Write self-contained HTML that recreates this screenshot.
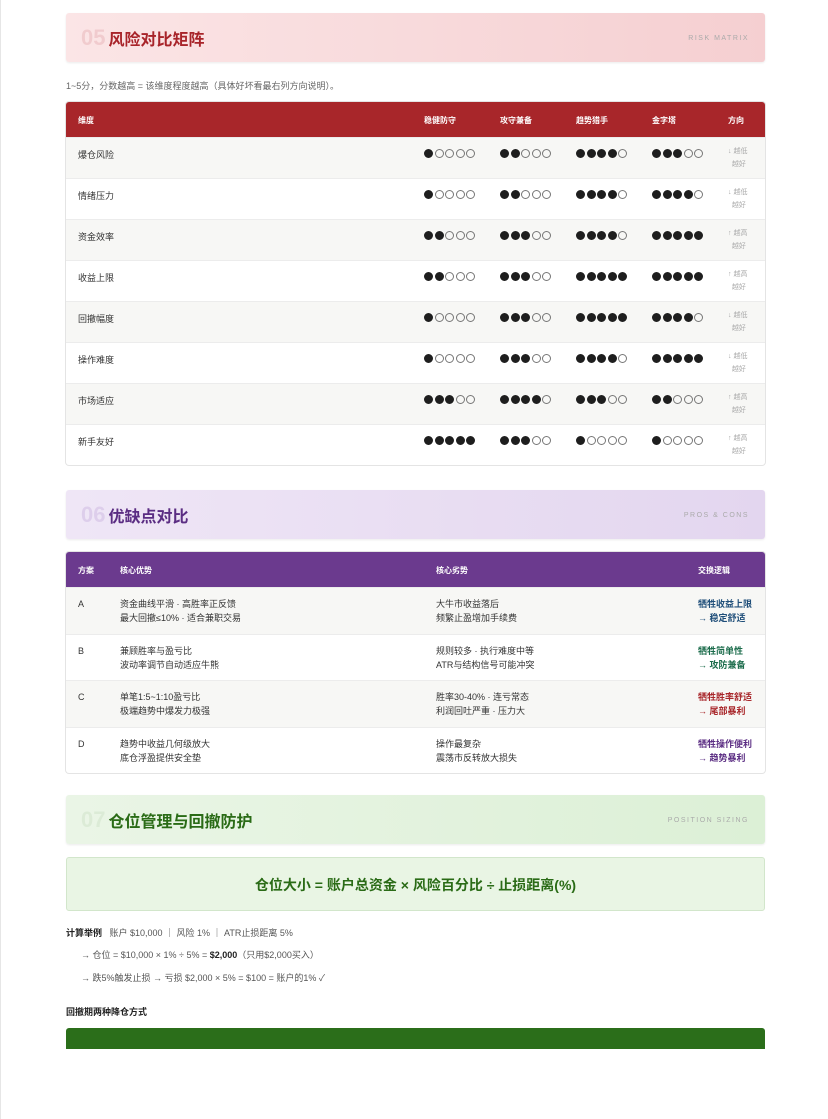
<!DOCTYPE html><html><head><meta charset="utf-8"><style>
*{box-sizing:border-box;margin:0;padding:0}
body{width:828px;height:1119px;background:#fff;font-family:"Liberation Sans","Noto Sans CJK SC",sans-serif;color:#333;position:relative;overflow:hidden;border-left:1px solid #e6e6e6}
.abs{position:absolute}
.sec{position:absolute;left:65px;width:699px;height:49px;border-radius:3px;box-shadow:0 1px 2px rgba(0,0,0,.08)}
.sec .h{position:absolute;left:15px;top:12px;display:flex;align-items:baseline;gap:3px}
.sec .n{font-size:22px;font-weight:bold;opacity:.5}
.sec .t{font-size:16px;font-weight:bold}
.sec .e{position:absolute;right:16px;top:22px;font-size:7px;letter-spacing:1.5px;color:#aaa}
.tbl{position:absolute;left:65px;width:699px;border-radius:3px;overflow:hidden;box-shadow:0 0 0 1px #e4e4e4}
.hd{height:35px;color:#fff;font-size:8px;font-weight:bold;position:relative}
.row{position:relative;border-top:1px solid #ececec;font-size:9px;color:#333}
.row:nth-child(odd){background:#f7f7f5}
.c{position:absolute}
.d{display:flex;gap:1.5px}
.d i{display:block;width:9px;height:9px;border-radius:50%;border:1px solid #777}
.d i.f{background:#1e1e1e;border-color:#1e1e1e}
.dir{font-size:7px;color:#aaa;line-height:13px}
</style></head><body>
<div class="sec" style="top:13px;background:linear-gradient(90deg,#fbe5e6,#f5cfd1)"><div class="h"><span class="n" style="color:#e8b4b8">05</span><span class="t" style="color:#a8242a">风险对比矩阵</span></div><span class="e">RISK MATRIX</span></div>
<div class="abs" style="left:65px;top:79px;font-size:9px;color:#666">1~5分，分数越高 = 该维度程度越高（具体好坏看最右列方向说明）。</div>
<div class="tbl" style="top:102px">
<div class="hd" style="background:#a8262a"><span class="c" style="left:12px;top:13px">维度</span><span class="c" style="left:358px;top:13px">稳健防守</span><span class="c" style="left:434px;top:13px">攻守兼备</span><span class="c" style="left:510px;top:13px">趋势猎手</span><span class="c" style="left:586px;top:13px">金字塔</span><span class="c" style="left:662px;top:13px">方向</span></div>
<div id="rows"></div>
</div>
<div class="sec" style="top:490px;background:linear-gradient(90deg,#efe6f6,#e3d6ef)"><div class="h"><span class="n" style="color:#cdb8e2">06</span><span class="t" style="color:#5b2d83">优缺点对比</span></div><span class="e">PROS &amp; CONS</span></div>
<div class="tbl" style="top:552px">
<div class="hd" style="background:#6b3a8e"><span class="c" style="left:12px;top:13px">方案</span><span class="c" style="left:54px;top:13px">核心优势</span><span class="c" style="left:370px;top:13px">核心劣势</span><span class="c" style="left:632px;top:13px">交换逻辑</span></div>
<div id="pc"></div>
</div>
<div class="sec" style="top:795px;background:linear-gradient(90deg,#eaf5e6,#dcf0d6)"><div class="h"><span class="n" style="color:#cfe3c9">07</span><span class="t" style="color:#2a6b16">仓位管理与回撤防护</span></div><span class="e">POSITION SIZING</span></div>
<div class="abs" style="left:65px;top:857px;width:699px;height:54px;background:#e9f5e4;border:1px solid #d2e6cb;border-radius:3px;text-align:center;line-height:54px;font-size:14px;font-weight:bold;color:#2a6b16">仓位大小 = 账户总资金 × 风险百分比 ÷ 止损距离(%)</div>
<div class="abs" style="left:65px;top:926px;font-size:9px;color:#555"><b style="color:#222">计算举例</b>&nbsp;&nbsp; 账户 $10,000 ｜ 风险 1% ｜ ATR止损距离 5%</div>
<div class="abs" style="left:80px;top:948px;font-size:9px;color:#555">→ 仓位 = $10,000 × 1% ÷ 5% = <b style="color:#222">$2,000</b>（只用$2,000买入）</div>
<div class="abs" style="left:80px;top:971px;font-size:9px;color:#555">→ 跌5%触发止损 → 亏损 $2,000 × 5% = $100 = 账户的1% ✓</div>
<div class="abs" style="left:65px;top:1005px;font-size:9px;font-weight:bold;color:#222">回撤期两种降仓方式</div>
<div class="abs" style="left:65px;top:1028px;width:699px;height:21px;background:#2b6e1a;border-radius:3px 3px 0 0"></div>
<script>
var R=[["爆仓风险",1,2,4,3,0],["情绪压力",1,2,4,4,0],["资金效率",2,3,4,5,1],["收益上限",2,3,5,5,1],["回撤幅度",1,3,5,4,0],["操作难度",1,3,4,5,0],["市场适应",3,4,3,2,1],["新手友好",5,3,1,1,1]];
var h="";R.forEach(function(r){h+='<div class="row" style="height:41px"><span class="c" style="left:12px;top:10px">'+r[0]+'</span>';[1,2,3,4].forEach(function(i){var s="";for(var k=0;k<5;k++)s+='<i'+(k<r[i]?' class="f"':'')+'></i>';h+='<span class="c d" style="left:'+(358+(i-1)*76)+'px;top:11px">'+s+'</span>'});h+='<span class="c dir" style="left:662px;top:7px">'+(r[5]?'↑ 越高<br>&nbsp;&nbsp;越好':'↓ 越低<br>&nbsp;&nbsp;越好')+'</span></div>'});
document.getElementById("rows").innerHTML=h;
var P=[["A","资金曲线平滑 · 高胜率正反馈","最大回撤≤10% · 适合兼职交易","大牛市收益落后","频繁止盈增加手续费","牺牲收益上限","→ 稳定舒适","#1f4e79"],["B","兼顾胜率与盈亏比","波动率调节自动适应牛熊","规则较多 · 执行难度中等","ATR与结构信号可能冲突","牺牲简单性","→ 攻防兼备","#1a6b4a"],["C","单笔1:5~1:10盈亏比","极端趋势中爆发力极强","胜率30-40% · 连亏常态","利润回吐严重 · 压力大","牺牲胜率舒适","→ 尾部暴利","#a8262a"],["D","趋势中收益几何级放大","底仓浮盈提供安全垫","操作最复杂","震荡市反转放大损失","牺牲操作便利","→ 趋势暴利","#5b2d83"]];
h="";P.forEach(function(p){h+='<div class="row" style="height:46.5px;line-height:14px"><span class="c" style="left:12px;top:9px">'+p[0]+'</span><span class="c" style="left:54px;top:9px">'+p[1]+'<br>'+p[2]+'</span><span class="c" style="left:370px;top:9px">'+p[3]+'<br>'+p[4]+'</span><span class="c" style="left:632px;top:9px;font-weight:bold;color:'+p[7]+'">'+p[5]+'<br>'+p[6]+'</span></div>'});
document.getElementById("pc").innerHTML=h;
</script>
</body></html>
